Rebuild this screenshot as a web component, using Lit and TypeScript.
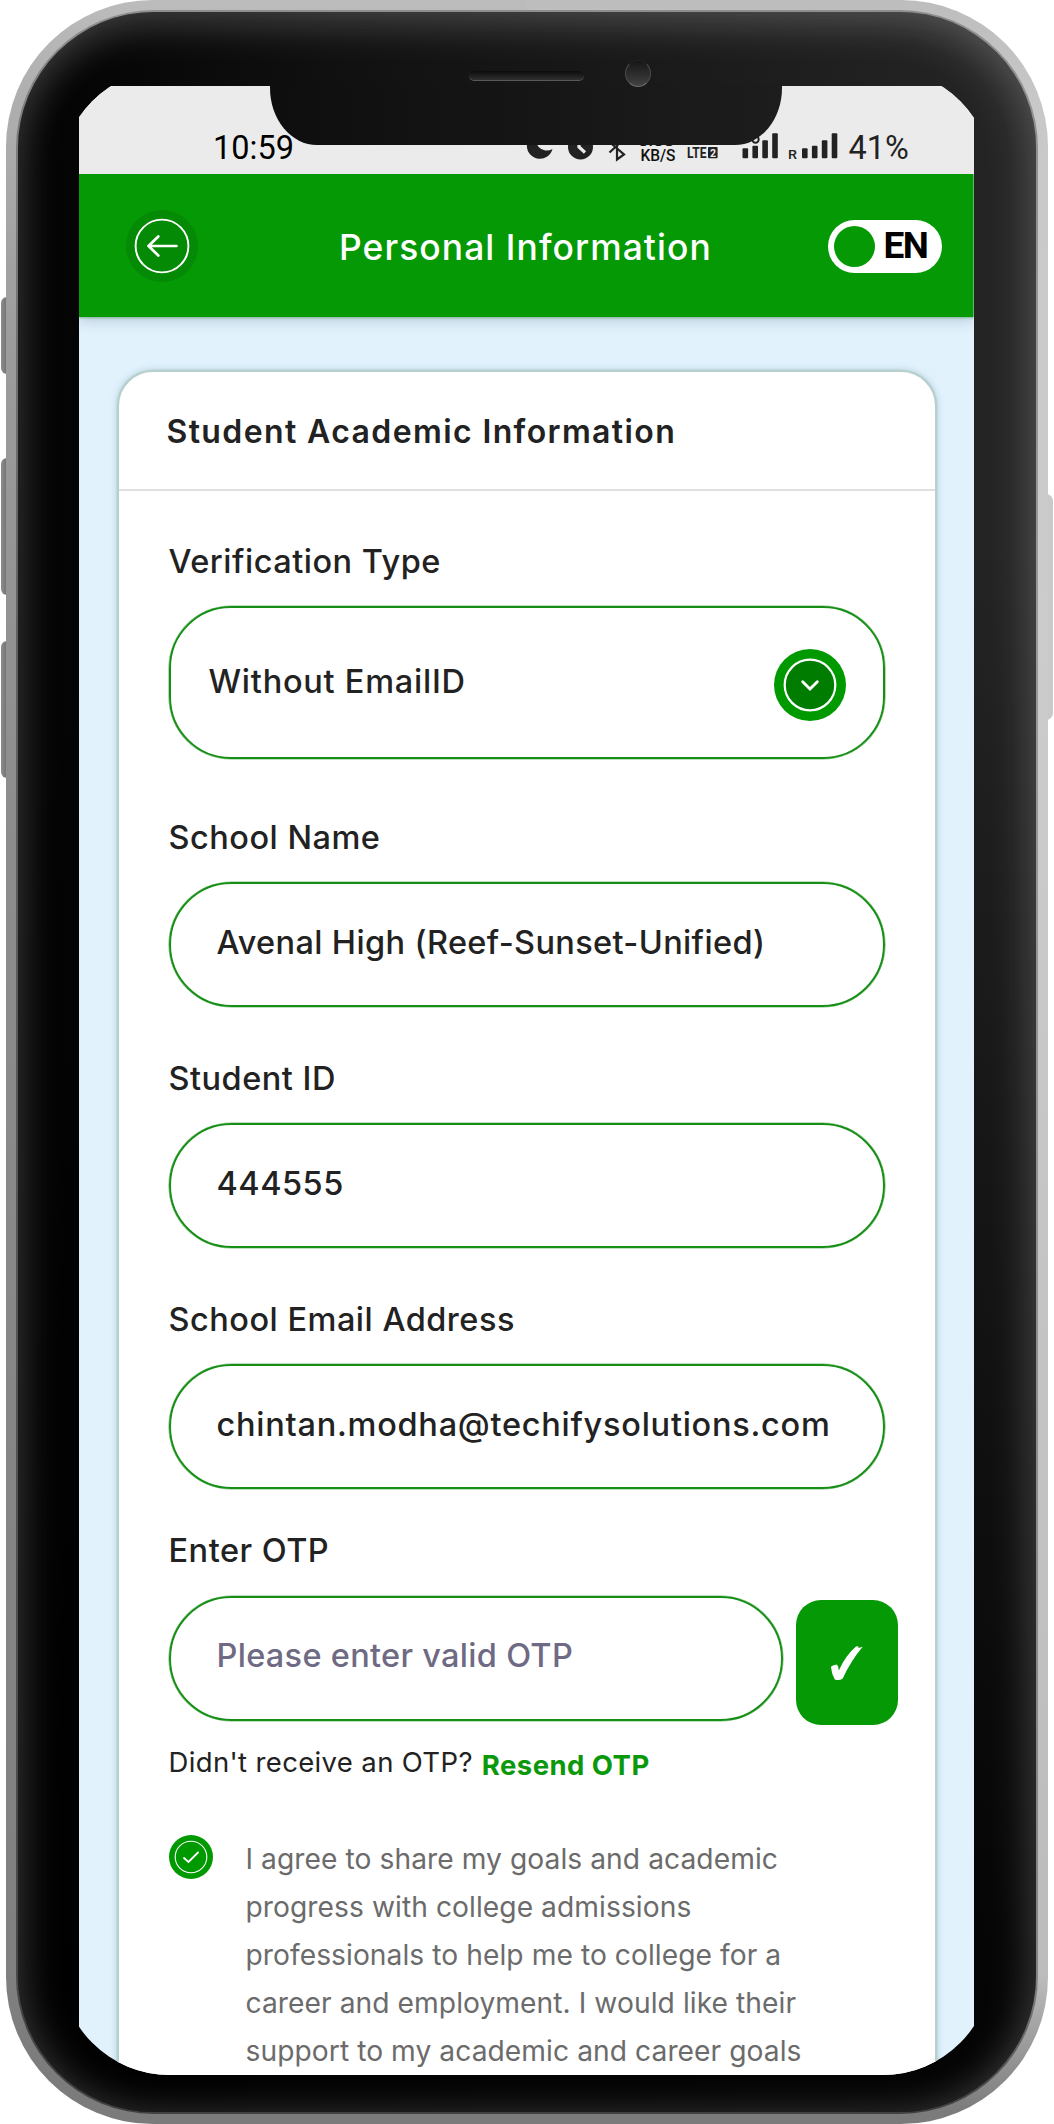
import { LitElement, html, css, svg } from "lit";
import { customElement, property } from "lit/decorators.js";

/** Four rising signal bars starting at the given x. */
const bars = (x: number) =>
  [10, 12.5, 18, 25].map(
    (height, i) => svg`<rect x=${x + i * 9.9} y=${28.3 - height} width="5.6" height=${height} rx="1" fill="#222"/>`
  );

/** Clock, do-not-disturb, alarm, bluetooth, network speed, LTE, signal bars and battery level. */
@customElement("status-bar")
export class StatusBar extends LitElement {
  static styles = css`
    :host {
      display: flex;
      align-items: flex-end;
      box-sizing: border-box;
      height: 88px;
      padding: 0 0 6px 134px;
      background: #ebebeb;
      color: #222;
      font: 400 32.5px/40px Roboto, sans-serif;
      white-space: nowrap;
    }
    .clock {
      width: 87px;
      color: #000;
    }
    .glyphs {
      display: block;
      flex: none;
      margin-left: 220.5px;
      margin-right: 2px;
    }
    .small {
      font-weight: 500;
      font-size: 16px;
    }
    .tiny {
      font-weight: 500;
      font-size: 12px;
    }
    .roaming {
      font-weight: 500;
      font-size: 13px;
    }
    .lte {
      font-weight: 700;
      font-size: 14px;
    }
  `;
  render() {
    return html`
      <span class="clock">10:59</span>
      <svg class="glyphs" width="326" height="38" viewBox="0 0 326 38">
        <path d="M17 3A13 13 0 1 0 31.5 19A11 11 0 0 1 17 3Z" fill="#222" />
        <circle cx="59.5" cy="17" r="12.5" fill="#222" />
        <path d="M58 8v9l6 5.5" stroke="#ebebeb" stroke-width="3.2" fill="none" />
        <path d="M88.5 12L103 24.5L96 29.5V4L103 9L88.5 22.5" stroke="#222" stroke-width="2.2" fill="none" />
        <text class="tiny" x="117" y="16.4" fill="#111" textLength="36" lengthAdjust="spacingAndGlyphs">0.00</text>
        <text class="small" x="119.5" y="31.3" fill="#111" textLength="35" lengthAdjust="spacingAndGlyphs">KB/S</text>
        <text class="lte" x="166" y="28.2" fill="#222" textLength="19.5" lengthAdjust="spacingAndGlyphs">LTE</text>
        <rect x="187" y="17" width="9.6" height="11.3" rx="1" fill="#222" />
        <text x="189" y="26.5" font-size="10.5" font-weight="700" fill="#ebebeb">2</text>
        <circle cx="234.5" cy="9.5" r="3.2" fill="none" stroke="#222" stroke-width="2" />
        ${bars(221.5)}
        <text class="roaming" x="267" y="28.5" fill="#222" textLength="9" lengthAdjust="spacingAndGlyphs">R</text>
        ${bars(281)}
      </svg>
      <span>41%</span>
    `;
  }
}

@customElement("app-header")
export class AppHeader extends LitElement {
  static styles = css`
    :host {
      display: flex;
      align-items: center;
      box-sizing: border-box;
      height: 143px;
      padding: 0 32px 0 46.5px;
      background: #059905;
      box-shadow: 0 1px 2px rgba(5, 120, 5, 0.35), 0 2px 14px rgba(60, 80, 100, 0.3);
      clip-path: inset(0 0 -20px 0);
      position: relative;
    }
    .back {
      display: block;
      margin-top: 1px;
    }
    .title {
      color: #fff;
      font: 500 35.4px/44px Inter, sans-serif;
      letter-spacing: 1.08px;
      white-space: nowrap;
      margin: 4px auto 0 141.5px;
    }
    .lang {
      display: flex;
      align-items: center;
      box-sizing: border-box;
      width: 114px;
      height: 53px;
      margin-top: 1.5px;
      padding-left: 6px;
      border-radius: 27px;
      background: #fff;
      color: #000;
      font: 700 37px/44px Roboto, sans-serif;
      letter-spacing: -1.6px;
    }
    .knob {
      width: 41px;
      height: 41px;
      margin-right: 9px;
      border-radius: 50%;
      background: #059905;
    }
  `;
  render() {
    return html`
      <svg class="back" width="72" height="72" viewBox="0 0 72 72">
        <circle cx="36" cy="36" r="36" fill="#048a04" />
        <circle cx="36" cy="36" r="26.4" fill="none" stroke="#fff" stroke-width="1.9" />
        <path d="M50.5 36H22.5M32.3 26.5L22.5 36L32.3 45.5" fill="none" stroke="#fff" stroke-width="2.7" stroke-linecap="round" stroke-linejoin="round" />
      </svg>
      <span class="title">Personal Information</span>
      <span class="lang"><span class="knob"></span>EN</span>
    `;
  }
}

@customElement("form-field")
export class FormField extends LitElement {
  @property() label = "";
  @property() value = "";
  @property({ type: Number }) tracking = 0.5;
  @property({ type: Boolean, reflect: true }) select = false;
  @property({ type: Boolean, reflect: true }) placeholder = false;
  static styles = css`
    :host {
      display: flex;
      flex-direction: column;
      gap: 24.5px;
      color: #222;
      font: 500 32.5px/40px Inter, sans-serif;
      letter-spacing: 0.5px;
      white-space: nowrap;
    }
    .row {
      display: flex;
      gap: 13px;
    }
    .box {
      flex: 1;
      display: flex;
      align-items: center;
      justify-content: space-between;
      box-sizing: border-box;
      height: 125px;
      padding: 0 36px 4px 46px;
      border: 2px solid #178f17;
      border-radius: 63px;
      box-shadow: 0 0 0 0.6px rgba(23, 143, 23, 0.55);
    }
    :host([select]) .box {
      height: 152.5px;
      padding: 0 37px 1px 38px;
      border-radius: 62px;
    }
    :host([placeholder]) .box {
      color: #6f6a84;
    }
    .arrow {
      display: block;
      margin-top: 7px;
    }
  `;
  render() {
    return html`
      <span>${this.label}</span>
      <div class="row">
        <div class="box">
          <span style="letter-spacing:${this.tracking}px">${this.value}</span>
          ${this.select
            ? html`<svg class="arrow" width="72" height="72" viewBox="0 0 72 72">
                <circle cx="36" cy="36" r="36" fill="#009a00" />
                <circle cx="36" cy="36" r="25.3" fill="#007d00" stroke="#fff" stroke-width="2.2" />
                <path d="M28.7 32.8L36 40L43.3 32.8" fill="none" stroke="#fff" stroke-width="2.9" stroke-linecap="round" />
              </svg>`
            : ""}
        </div>
        <slot></slot>
      </div>
    `;
  }
}

@customElement("app-root")
export class AppRoot extends LitElement {
  static styles = css`
    :host {
      display: block;
      width: 1054px;
      height: 2124px;
      overflow: hidden;
      background: #fff;
    }
    .stage {
      position: relative;
      box-sizing: border-box;
      height: 2124px;
      padding: 0 6px;
    }
    .key {
      position: absolute;
      left: 1px;
      width: 9px;
      border-radius: 6px 0 0 6px;
      background: linear-gradient(to right, #8d8d8d, #626262);
    }
    .k1 { top: 297px; height: 77px; }
    .k2 { top: 458px; height: 137px; }
    .k3 { top: 641px; height: 137px; }
    .k4 {
      top: 494px;
      height: 226px;
      left: 1044px;
      border-radius: 0 7px 7px 0;
      background: #c9c9c9;
    }
    .frame {
      position: relative;
      box-sizing: border-box;
      height: 2124px;
      padding: 10px;
      border-radius: 147px;
      background: linear-gradient(to top, #7b7b7b 12px, rgba(123, 123, 123, 0) 150px),
        linear-gradient(#bcbcbc, #b0b0b0 4%, #9c9c9c 16%, #8d8d8d 38%, #7e7e7e) left / 50% 100% no-repeat,
        linear-gradient(#bdbdbd, #c8c8c8 5%, #cccccc 30%, #bdbdbd 90%);
    }
    .rim {
      box-sizing: border-box;
      height: 2104px;
      padding: 2px;
      border-radius: 138px;
      background: linear-gradient(to top, #414141 6px, rgba(65, 65, 65, 0) 140px),
        linear-gradient(#8e8e8e, #7c7c7c 6%, #606060 30%, #454545) left / 50% 100% no-repeat,
        linear-gradient(#8e8e8e, #9a9a9a 30%, #858585 90%);
    }
    .bezel {
      box-sizing: border-box;
      height: 2100px;
      padding: 74px 62.5px 0 61px;
      border-radius: 136px;
      background: linear-gradient(to bottom, transparent 25%, rgba(0, 0, 0, 0.88) 92%),
        linear-gradient(to right, #020202, #101010 30%, #242424 95%);
      box-shadow: inset 7px 0 44px rgba(255, 255, 255, 0.13), inset -8px 12px 46px rgba(255, 255, 255, 0.16);
    }
    .screen {
      height: 1989px;
      overflow: hidden;
      background: #e1f2fd;
      clip-path: inset(-17px -19px 0 -19px round 110px);
    }
    .notch {
      position: absolute;
      left: 263.5px;
      top: 84px;
      width: 512.5px;
      height: 61px;
      border-radius: 0 0 47px 47px / 0 0 57px 57px;
      background: linear-gradient(to right, #0e0e0e, #1d1d1d);
    }
    .speaker {
      position: absolute;
      left: 463px;
      top: 71px;
      width: 115px;
      height: 10px;
      box-sizing: border-box;
      border-radius: 5px;
      background: linear-gradient(#0c0c0c, #303030);
      border-bottom: 1.5px solid #585858;
    }
    .camera {
      position: absolute;
      left: 619px;
      top: 60px;
      width: 26px;
      height: 27px;
      box-sizing: border-box;
      border-radius: 50%;
      background: linear-gradient(#161616, #424242);
      border: 1px solid #4c4c4c;
      border-top-color: #222;
      border-bottom-color: #6c6c6c;
    }
    .card {
      box-sizing: border-box;
      height: 1800px;
      margin: 53px 37px 0 38px;
      border: 2px solid #b8d0cc;
      border-radius: 36px;
      background: #fff;
      box-shadow: 0 0 0 0.6px rgba(184, 208, 204, 0.7), 0 0 7px rgba(90, 130, 140, 0.35);
    }
    .heading {
      box-sizing: border-box;
      height: 119px;
      padding: 39.5px 0 0 47.5px;
      border-bottom: 2px solid #e0e0e0;
      color: #222;
      font: 600 32px/40px Inter, sans-serif;
      letter-spacing: 1.38px;
      white-space: nowrap;
    }
    .form {
      padding: 50.5px 50px 0 49.5px;
      color: #222;
      font: 400 27.5px/36px Inter, sans-serif;
    }
    .f2 { margin-top: 59px; }
    .f3, .f4 { margin-top: 51.5px; }
    .f5 {
      margin: 42px -13px 0 0;
    }
    .verify {
      display: grid;
      place-items: center;
      width: 102px;
      height: 125px;
      margin-top: 4.5px;
      border-radius: 25px;
      background: #059905;
    }
    .resend {
      display: flex;
      gap: 9px;
      margin-top: 18.5px;
      white-space: nowrap;
      letter-spacing: 0.35px;
    }
    .link {
      margin-top: 3.5px;
      font-weight: 700;
      letter-spacing: 0.45px;
      color: #0b990b;
    }
    .agree {
      display: flex;
      gap: 33px;
      margin-top: 52px;
      color: #6b6b6b;
      font-size: 28.2px;
      line-height: 48.1px;
      letter-spacing: 0.06px;
      white-space: nowrap;
    }
    .tick {
      flex: none;
    }
  `;
  render() {
    return html`
      <div class="stage">
        <div class="key k1"></div>
        <div class="key k2"></div>
        <div class="key k3"></div>
        <div class="key k4"></div>
        <div class="frame">
          <div class="rim">
            <div class="bezel">
              <div class="screen">
                <status-bar></status-bar>
                <app-header></app-header>
                <div class="card">
                  <div class="heading">Student Academic Information</div>
                  <div class="form">
                    <form-field select label="Verification Type" value="Without EmailID" tracking="0.75"></form-field>
                    <form-field class="f2" label="School Name" value="Avenal High (Reef-Sunset-Unified)" tracking="0.36"></form-field>
                    <form-field class="f3" label="Student ID" value="444555" tracking="0.5"></form-field>
                    <form-field class="f4" label="School Email Address" value="chintan.modha@techifysolutions.com" tracking="0.74"></form-field>
                    <form-field class="f5" placeholder label="Enter OTP" value="Please enter valid OTP" tracking="0.3">
                      <div class="verify">
                        <svg width="36" height="39" viewBox="0 0 34 36">
                          <path d="M1.8 22Q4 20 7.5 19.8Q9 21.5 9.3 25.5Q16 11 25.5 3L27.5 2.6L28 4.2L31.8 3.2Q21 16 13 33Q10 35.5 5.5 34Q2.5 29 1.8 22Z" fill="#fff" />
                        </svg>
                      </div>
                    </form-field>
                    <div class="resend">
                      <span>Didn't receive an OTP?</span>
                      <span class="link">Resend OTP</span>
                    </div>
                    <div class="agree">
                      <svg class="tick" width="44" height="44" viewBox="0 0 44 44">
                        <circle cx="22" cy="22" r="22" fill="#009a00" />
                        <circle cx="22" cy="22" r="15.8" fill="none" stroke="#fff" stroke-width="1.1" />
                        <path d="M15 23L19.5 27L29 17.5" fill="none" stroke="#fff" stroke-width="1.8" stroke-linecap="round" />
                      </svg>
                      <div>
                        I agree to share my goals and academic<br />
                        progress with college admissions<br />
                        professionals to help me to college for a<br />
                        career and employment. I would like their<br />
                        support to my academic and career goals
                      </div>
                    </div>
                  </div>
                </div>
              </div>
            </div>
          </div>
          <div class="notch"></div>
          <div class="speaker"></div>
          <div class="camera"></div>
        </div>
      </div>
    `;
  }
}
